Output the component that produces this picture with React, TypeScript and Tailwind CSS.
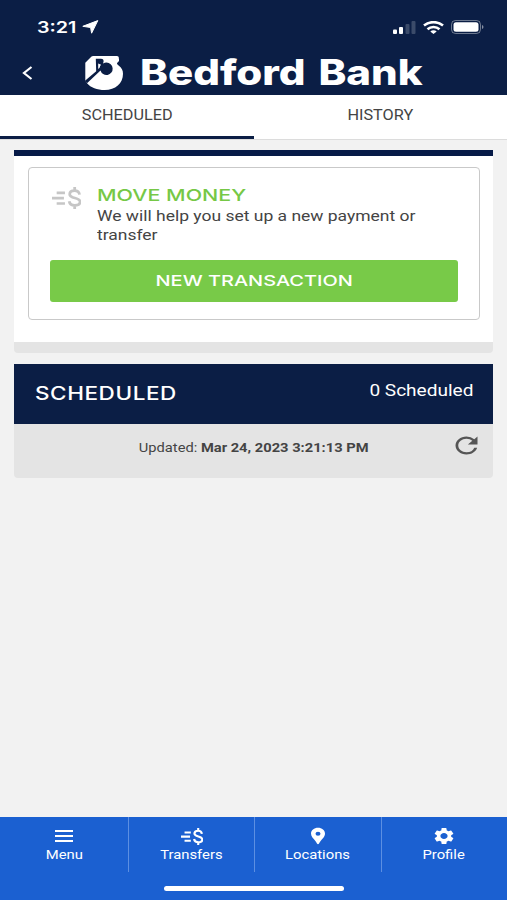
import React from "react";
import { MdLocationPin, MdRefresh, MdSettings } from "react-icons/md";

interface IconProps {
  className?: string;
}

function MoneyMoveIcon({ className }: IconProps) {
  return (
    <svg viewBox="0 0 28 22" preserveAspectRatio="none" className={className} fill="none" stroke="currentColor" strokeWidth="2.7">
      <path d="M4.5 5.800h8M0 11.200h11.500M4.500 16.500h8" />
      <path d="M26.600 7.600C26.200 5 24.400 3.600 21.800 3.600c-2.800 0-4.700 1.400-4.700 3.600 0 5 10 2.600 10 7.600 0 2.200-2 3.600-5.100 3.600-3.200 0-5-1.600-5.400-4.200M21.900 0v3.400M21.900 18.600V22" />
    </svg>
  );
}

function BankLogo({ className }: IconProps) {
  return (
    <svg viewBox="0 0 38 34" preserveAspectRatio="none" className={className}>
      <path
        fill="#fff"
        d="M6.5.6 8 0H32c1 0 1.800.8 1.800 1.800 0 1 .4 1.800.2 3C33.800 6 32 6.500 32 7.600c0 .8.9 1.200 1.600 1.800C36.700 11.500 38 14.200 38 17.700 38 27.400 30.300 34 19.800 34 12 34 5.800 31.500 2 27.200L.3 24.500V6.800Z"
      />
      <path
        fill="#0b1e45"
        d="M10.800 2.800h5.200c1.500 0 2.600.8 2.600 2.100 0 .9-.5 1.500-.3 2.500 1-.6 2-.8 3.200-.8a6.200 6.200 0 1 1-6 7.900L2 27.200 0 24.800 11.200 15.200Z"
      />
      <path fill="#fff" d="M13.200 7.500v5.400l1.400-1.200c.2-1.200.7-2.200 1.500-3Z" />
    </svg>
  );
}

function StatusBar() {
  return (
    <div className="flex h-[54px] items-center justify-between pl-[37px] pr-[23px]">
      <div className="flex items-center gap-1">
        <span className="block w-[41px] text-base leading-none">
          <span className="inline-block origin-left scale-x-[1.23] font-['Inter'] font-semibold">3:21</span>
        </span>
        <svg width="17" height="14" viewBox="0 0 17 14">
          <path d="M15.800.6 9.600 13.200 8.600 7.500.8 6.300Z" fill="#fff" stroke="#fff" strokeLinejoin="round" />
        </svg>
      </div>
      <div className="flex items-center gap-[7px]">
        <svg width="23" height="13" viewBox="0 0 23 13" fill="#fff">
          <rect x="0" y="8.500" width="4" height="4.500" rx="1" />
          <rect x="6" y="6" width="4" height="7" rx="1" />
          <rect x="12.500" y="3" width="4" height="10" rx="1" opacity=".2" />
          <rect x="18.500" y="0" width="4" height="13" rx="1" opacity=".2" />
        </svg>
        <svg width="21" height="13" viewBox="0 0 21 13" fill="none" stroke="#fff" strokeWidth="2.600">
          <path d="M1 4.600C6.400 0 14.600 0 20 4.600M4.500 8.200c3.400-3 8.600-3 12 0" />
          <path d="M7.300 10.400c1.900-1.500 4.500-1.500 6.400 0L10.500 13Z" fill="#fff" stroke="none" />
        </svg>
        <svg width="33" height="14" viewBox="0 0 33 14">
          <rect x=".5" y=".5" width="29" height="13" rx="4" fill="none" stroke="#fff" opacity=".4" />
          <rect x="2.500" y="2.200" width="25" height="9.600" rx="2.500" fill="#fff" />
          <path d="M31 5c2 .7 2 3.300 0 4Z" fill="#fff" opacity=".5" />
        </svg>
      </div>
    </div>
  );
}

function Header() {
  return (
    <header className="h-[95px] bg-[#0b1e45] text-white">
      <StatusBar />
      <div className="flex h-[38px] items-center">
        <button aria-label="Back" className="ml-[22px] mr-[52px] block">
          <svg width="11" height="14" viewBox="0 0 11 14" fill="none" stroke="#fff" strokeWidth="2.200">
            <path d="M9.500 1 2 7l7.500 6" />
          </svg>
        </button>
        <BankLogo className="h-[34px] w-[38px]" />
        <span className="ml-[17px] block whitespace-nowrap text-[35px] leading-none">
          <span className="inline-block origin-left scale-x-[1.2] font-['Inter'] font-extrabold [word-spacing:3px]">
            Bedford Bank
          </span>
        </span>
      </div>
    </header>
  );
}

function Tabs() {
  return (
    <nav className="flex h-[45px] border-b border-[#dcdcdc] bg-white text-sm text-[#444]">
      <button className="flex w-[254px] justify-center border-b-[3px] border-[#0b1e45] pt-[10px]">
        <span className="inline-block scale-x-[1.16]">SCHEDULED</span>
      </button>
      <button className="flex w-[253px] justify-center pt-[10px]">
        <span className="inline-block scale-x-[1.16]">HISTORY</span>
      </button>
    </nav>
  );
}

function MoveMoneyCard() {
  return (
    <section className="h-[203px] rounded-b border-b-[11px] border-t-[6px] border-b-[#e4e4e4] border-t-[#061a47] bg-white px-[14px] pt-[11px]">
      <div className="h-[153px] w-[452px] rounded-[4px] border border-[#c9c9c9] px-[21px]">
        <div className="flex h-[92px] pt-[17px]">
          <MoneyMoveIcon className="ml-[2px] mt-[2px] h-[22px] w-[29px] text-[#c6c6c6]" />
          <div className="ml-4 whitespace-nowrap">
            <h2 className="h-[22px] text-base leading-5 text-[#76c846]">
              <span className="inline-block origin-left scale-x-[1.34] font-['Inter'] font-medium">MOVE MONEY</span>
            </h2>
            <p className="origin-left scale-x-[1.165] text-[15px] leading-[19px] text-[#444]">
              We will help you set up a new payment or
              <br />
              transfer
            </p>
          </div>
        </div>
        <button className="flex h-[42px] w-full items-center justify-center rounded-[3px] bg-[#78ca48] text-[15px] text-white">
          <span className="inline-block scale-x-[1.33] whitespace-nowrap font-['Inter'] font-medium">NEW TRANSACTION</span>
        </button>
      </div>
    </section>
  );
}

function ScheduledPanel() {
  return (
    <section className="mt-[11px]">
      <div className="flex h-[60px] justify-between bg-[#0b1e45] pl-[21px] pr-5 text-white">
        <h2 className="pt-[18px] text-[18px] leading-6">
          <span className="inline-block origin-left scale-x-[1.25] font-['Inter'] font-medium tracking-wide">SCHEDULED</span>
        </h2>
        <span className="pt-[15px] text-base leading-6">
          <span className="inline-block origin-right scale-x-[1.19]">0 Scheduled</span>
        </span>
      </div>
      <div className="flex h-[54px] rounded-b bg-[#e4e4e4] text-[#444]">
        <p className="ml-[60px] w-[360px] pt-[14px] text-center text-[13px] leading-5">
          <span className="inline-block scale-x-[1.13] whitespace-nowrap">
            Updated: <b>Mar 24, 2023 3:21:13 PM</b>
          </span>
        </p>
        <button aria-label="Refresh" className="ml-4 mt-[8px] h-[27px] w-[33px]">
          <MdRefresh className="h-full w-full text-[#555]" preserveAspectRatio="none" />
        </button>
      </div>
    </section>
  );
}

function MenuIcon({ className }: IconProps) {
  return (
    <svg viewBox="0 0 18 12" className={className} fill="none" stroke="currentColor" strokeWidth="2">
      <path d="M0 1h18M0 6h18M0 11h18" />
    </svg>
  );
}

const navItems = [
  { label: "Menu", icon: <MenuIcon className="h-3 w-[18px]" /> },
  { label: "Transfers", icon: <MoneyMoveIcon className="h-[17px] w-[22px]" /> },
  { label: "Locations", icon: <MdLocationPin className="h-5 w-6" preserveAspectRatio="none" /> },
  { label: "Profile", icon: <MdSettings className="h-5 w-6" preserveAspectRatio="none" /> },
];

function BottomNav() {
  return (
    <footer className="h-[83px] bg-[#1b60d1] text-white">
      <div className="grid h-[55px] grid-cols-[129px_126px_127px_125px]">
        {navItems.map((item) => (
          <button key={item.label} className="flex flex-col items-center border-r border-[#5c8fe2] pt-2 last:border-r-0 last:pr-px">
            <span className="flex h-[22px] items-center">{item.icon}</span>
            <span className="inline-block scale-x-[1.14] text-[13px] leading-4">{item.label}</span>
          </button>
        ))}
      </div>
      <div className="mx-auto mt-[14px] h-[5px] w-[180px] rounded-full bg-white" />
    </footer>
  );
}

export default function App() {
  return (
    <div className="flex h-[900px] w-[507px] flex-col overflow-hidden bg-[#f2f2f2] font-['Roboto',sans-serif]">
      <Header />
      <Tabs />
      <main className="flex-1 px-[14px] pt-[10px]">
        <MoveMoneyCard />
        <ScheduledPanel />
      </main>
      <BottomNav />
    </div>
  );
}
